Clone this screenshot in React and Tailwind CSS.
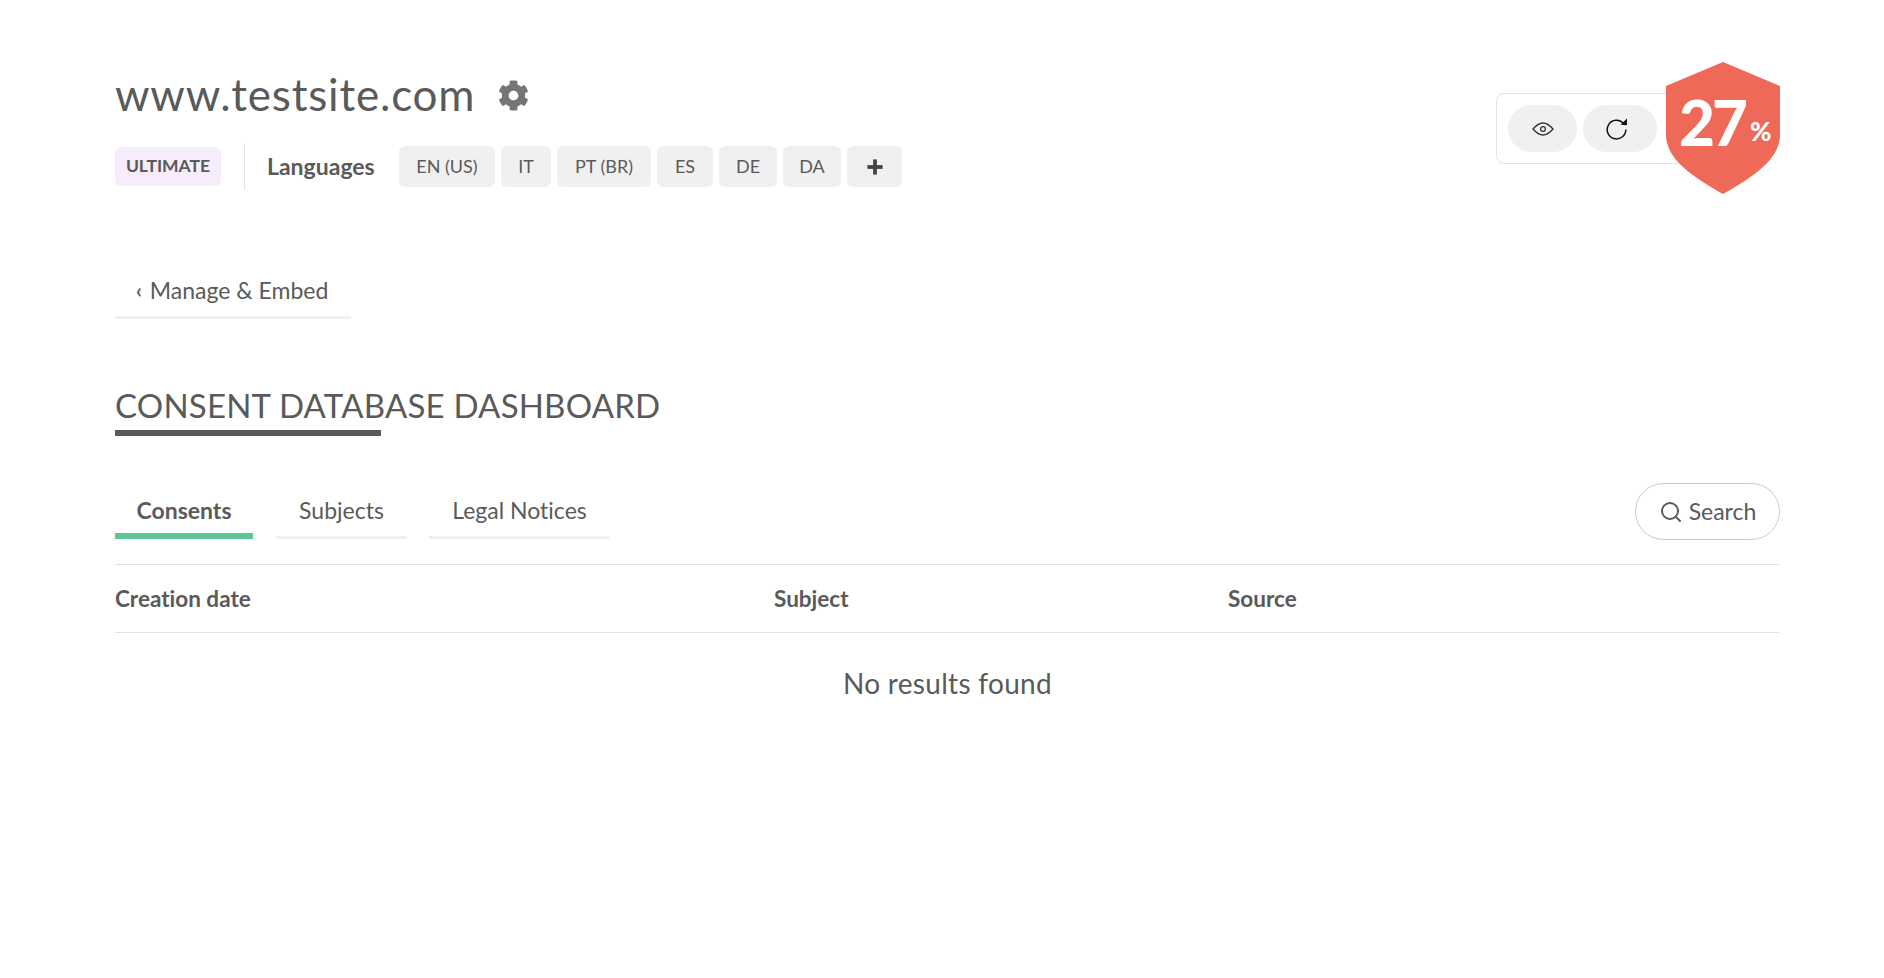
import { Search, Plus } from 'lucide-react';

const LANGUAGES = [
  { label: 'EN (US)', width: 'w-[96px]' },
  { label: 'IT', width: 'w-[50px]' },
  { label: 'PT (BR)', width: 'w-[94px]' },
  { label: 'ES', width: 'w-[56px]' },
  { label: 'DE', width: 'w-[58px]' },
  { label: 'DA', width: 'w-[58px]' },
];

function Gear() {
  return (
    <svg viewBox="0 0 512 512" className="w-[31px] h-[31px] fill-[#757575]">
      <path d="M487.4 315.7l-42.6-24.6c4.3-23.2 4.3-47 0-70.2l42.6-24.6c4.9-2.8 7.1-8.6 5.5-14-11.1-35.6-30-67.8-54.7-94.6-3.8-4.1-10-5.1-14.8-2.3L380.8 110c-17.9-15.4-38.5-27.3-60.8-35.1V25.8c0-5.6-3.9-10.5-9.4-11.7-36.7-8.2-74.3-7.8-109.2 0-5.5 1.2-9.4 6.1-9.4 11.7V75c-22.2 7.9-42.8 19.8-60.8 35.1L88.7 85.5c-4.9-2.8-11-1.9-14.8 2.3-24.7 26.7-43.6 58.9-54.7 94.6-1.7 5.4.6 11.2 5.5 14L67.3 221c-4.3 23.2-4.3 47 0 70.2l-42.6 24.6c-4.9 2.8-7.1 8.6-5.5 14 11.1 35.6 30 67.8 54.7 94.6 3.8 4.1 10 5.1 14.8 2.3l42.6-24.6c17.9 15.4 38.5 27.3 60.8 35.1v49.2c0 5.6 3.9 10.5 9.4 11.7 36.7 8.2 74.3 7.8 109.2 0 5.5-1.2 9.4-6.1 9.4-11.7v-49.2c22.2-7.9 42.8-19.8 60.8-35.1l42.6 24.6c4.9 2.8 11 1.9 14.8-2.3 24.7-26.7 43.6-58.9 54.7-94.6 1.5-5.5-.7-11.3-5.6-14.1zM256 336c-44.1 0-80-35.9-80-80s35.9-80 80-80 80 35.9 80 80-35.9 80-80 80z" />
    </svg>
  );
}

function EyeIcon() {
  return (
    <svg viewBox="0 0 22 14" className="w-[22px] h-[14px] fill-none stroke-[#333333] stroke-[1.3]">
      <path d="M1 7C5 2.4 8 1 11 1s6 1.4 10 6c-4 4.6-7 6-10 6S5 11.600 1 7Z" />
      <circle cx="11" cy="7" r="2.4" />
    </svg>
  );
}

function RefreshIcon() {
  return (
    <svg viewBox="0 0 22 22" className="w-[22px] h-[22px] fill-none stroke-[#111111] stroke-[1.5]">
      <path d="M17.500 5.500A9.300 9.300 0 1 0 19.800 11.500" />
      <path d="M14.500 6.800 21 7.200 21 0.500Z" className="fill-[#111111] stroke-none" />
    </svg>
  );
}

function Shield() {
  return (
    <div className="absolute right-0 top-0 w-[114px] h-[132px] flex items-start">
      <svg viewBox="0 0 114 132" className="absolute inset-0 w-full h-full fill-[#ee6957]">
        <path d="M57 0 L114 24 V72 C114 94 96 110 57 132 C18 110 0 94 0 72 V24 Z" />
      </svg>
      <div className="relative flex items-baseline pl-[13px] pt-[25px] text-white font-black">
        <span className="text-[62px] leading-[70px] tracking-[-3px]">27</span>
        <span className="text-[26px] leading-none ml-[5px] -translate-y-[5px]">%</span>
      </div>
    </div>
  );
}

export default function App() {
  return (
    <div className="min-h-[978px] bg-white pl-[115px] pr-[104px] text-[#5a5a5a] font-['Lato','Noto_Sans',sans-serif] [font-variant-ligatures:none]">
      {/* Site header */}
      <div className="flex justify-between items-start pt-[62px]">
        <div>
          <div className="flex items-center h-[66px]">
            <h1 className="text-[44px] leading-none tracking-[0.8px] font-normal -mt-[2px]">www.testsite.com</h1>
            <span className="ml-[23px]"><Gear /></span>
          </div>
          <div className="flex items-center mt-[15px]">
            <span className="w-[106px] h-[39px] flex items-center justify-center rounded-[6px] bg-[#f6ecfb] text-[17.5px] font-bold">ULTIMATE</span>
            <div className="w-px h-[47px] bg-[#e3e3e8] ml-[23px]" />
            <span className="ml-[22px] w-[132px] text-[23px] font-bold">Languages</span>
            <div className="flex gap-[6px]">
              {LANGUAGES.map((lang) => (
                <button key={lang.label} className={`${lang.width} h-[41px] flex items-center justify-center rounded-[6px] bg-[#f0f0f0] text-[18px]`}>
                  {lang.label}
                </button>
              ))}
              <button className="w-[55px] h-[41px] flex items-center justify-center rounded-[6px] bg-[#f0f0f0]">
                <Plus className="w-[26px] h-[26px] text-[#444444]" strokeWidth={3.5} strokeLinecap="butt" />
              </button>
            </div>
          </div>
        </div>

        <div className="relative w-[284px] h-[132px]">
          <div className="mt-[31px] w-[220px] h-[71px] border border-[#e3e3e8] rounded-[8px] flex items-center gap-[6px] pl-[11px]">
            <button className="w-[69px] h-[47px] rounded-full bg-[#f0f0f0] flex items-center justify-center">
              <EyeIcon />
            </button>
            <button className="w-[74px] h-[47px] rounded-full bg-[#f0f0f0] flex items-center justify-center pr-[7px]">
              <RefreshIcon />
            </button>
          </div>
          <Shield />
        </div>
      </div>

      {/* Back link */}
      <div className="mt-[71px] w-[236px] h-[54px] border-b-[3px] border-[#f0f0f0] flex items-center pl-[21px] text-[23px]">
        <span className="text-[20px] font-bold mr-[8px] -mt-[2px]">‹</span>Manage &amp; Embed
      </div>

      {/* Heading */}
      <div className="mt-[66px]">
        <h2 className="text-[33px] leading-[42px] pb-[4px] -mt-[1px] font-normal tracking-[0.2px]">CONSENT DATABASE DASHBOARD</h2>
        <div className="w-[266px] h-[6px] bg-[#5a5a5a]" />
      </div>

      {/* Tabs */}
      <div className="flex items-end justify-between mt-[46px] h-[57px]">
        <div className="flex items-end text-[23px]">
          <div className="w-[138px] h-[46px] border-b-[6px] border-[#5cc694] flex items-start justify-center font-bold">Consents</div>
          <div className="ml-[23px] w-[131px] h-[46px] border-b-[3px] border-[#f0f0f0] flex items-start justify-center">Subjects</div>
          <div className="ml-[22px] w-[181px] h-[46px] border-b-[3px] border-[#f0f0f0] flex items-start justify-center">Legal Notices</div>
        </div>
        <button className="w-[145px] h-[57px] rounded-full border border-[#cccccc] flex items-center justify-center gap-[6px] text-[23px] mb-[-1px]">
          <Search className="w-[24px] h-[24px]" strokeWidth={2} />
          Search
        </button>
      </div>

      {/* Table */}
      <div className="mt-[25px] border-y border-[#e3e3e8] h-[69px] grid grid-cols-[659px_454px_1fr] items-center text-[22.5px] font-bold">
        <span>Creation date</span>
        <span>Subject</span>
        <span>Source</span>
      </div>
      <p className="mt-[29px] text-center text-[28px] tracking-[0.3px]">No results found</p>
    </div>
  );
}
